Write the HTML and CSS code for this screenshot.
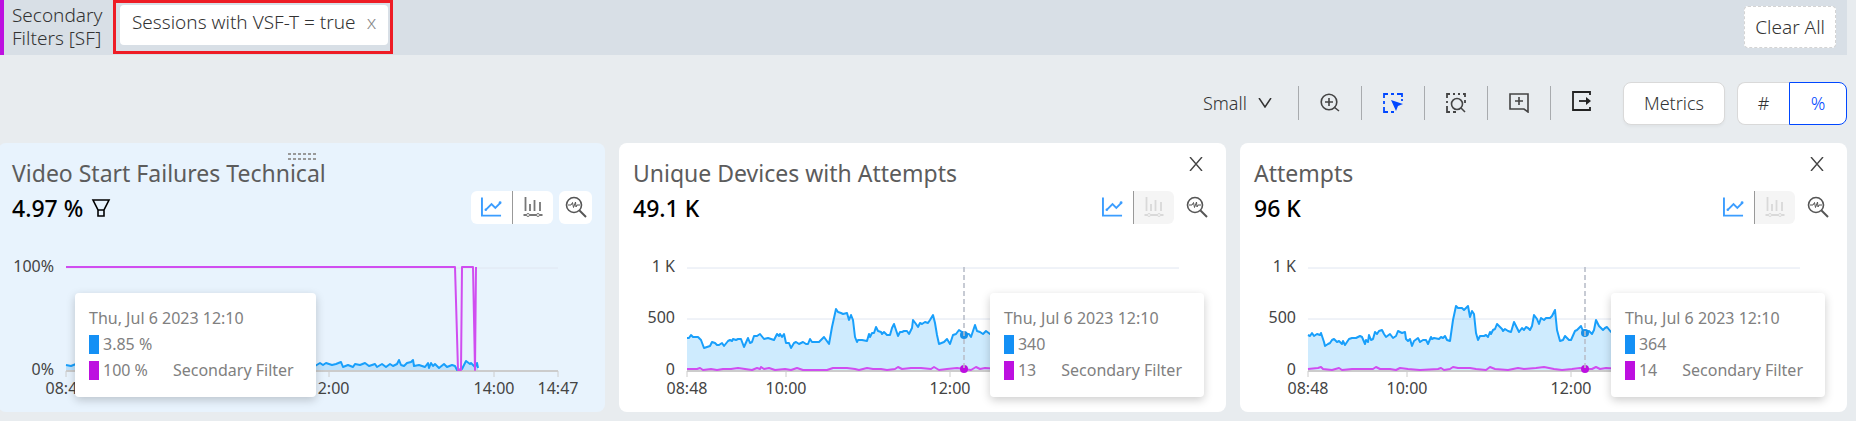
FILE: index.html
```html
<!DOCTYPE html>
<html lang="en">
  <head>
    <meta charset="UTF-8" />
    <meta name="viewport" content="width=device-width, initial-scale=1.0" />
    <title>Metrics Dashboard</title>
    <link rel="stylesheet" href="styles.css" />
  </head>
  <body>
    <!-- Shared icons -->
    <svg class="sprite" aria-hidden="true">
      <symbol id="icon-line" viewBox="0 0 22 20">
        <path d="M1 0V19H21" fill="none" stroke="currentColor" stroke-width="2" />
        <path d="M5 13L11 7L15 11L20 6" fill="none" stroke="currentColor" stroke-width="2" />
        <circle cx="5" cy="13" r="1.3" fill="currentColor" />
        <circle cx="20" cy="5.5" r="1.5" fill="currentColor" />
      </symbol>
      <symbol id="icon-bars" viewBox="0 0 20 20">
        <path d="M2 0V14M6.500 7V14M11 3V14M16.500 5V14" fill="none" stroke="currentColor" stroke-width="1.800" />
        <path d="M0 18H3M6 18H13M16 18H19" fill="none" stroke="currentColor" stroke-width="1.800" />
        <circle cx="4.500" cy="18" r="1.500" fill="none" stroke="currentColor" />
        <circle cx="14.500" cy="18" r="1.500" fill="none" stroke="currentColor" />
      </symbol>
      <symbol id="icon-inspect" viewBox="0 0 22 22">
        <circle cx="9" cy="9" r="7.500" fill="none" stroke="currentColor" stroke-width="1.600" />
        <path d="M14.500 14.500L21 21" fill="none" stroke="currentColor" stroke-width="2" />
        <path d="M3 9H6L7.500 6.500L8.500 11.500L10.500 6L11 11L12 9H15" fill="none" stroke="currentColor" />
      </symbol>
      <symbol id="icon-close" viewBox="0 0 14 14">
        <path d="M1 0L13 14M13 0L1 14" fill="none" stroke="currentColor" stroke-width="1.400" />
      </symbol>
    </svg>

    <!-- Secondary filters -->
    <header class="filter-bar">
      <p class="filter-title">Secondary<br />Filters [SF]</p>
      <div class="filter-highlight">
        <div class="chip">
          <span>Sessions with VSF-T = true</span>
          <button type="button" class="chip-remove" aria-label="Remove filter">x</button>
        </div>
      </div>
      <button type="button" class="clear-btn">Clear All</button>
    </header>

    <!-- Toolbar -->
    <div class="toolbar">
      <div class="size-picker">
        <select class="size-select" aria-label="Chart size">
          <option>Small</option>
          <option>Medium</option>
          <option>Large</option>
        </select>
        <svg class="chevron" viewBox="0 0 14 10" aria-hidden="true">
          <path d="M1 0L7 9L13 0" fill="none" stroke="currentColor" stroke-width="1.500" />
        </svg>
      </div>
      <button type="button" class="tool" aria-label="Zoom in">
        <svg viewBox="0 0 20 20">
          <circle cx="9" cy="9" r="7.800" fill="none" stroke="currentColor" stroke-width="1.600" />
          <path d="M14 14L19 18M9 5V13M5 9H13" fill="none" stroke="currentColor" stroke-width="1.600" />
        </svg>
      </button>
      <button type="button" class="tool tool-active" aria-label="Select area">
        <svg viewBox="0 0 20 20">
          <path d="M1 5V1H5M8 1H11M14 1H19V4M19 6V8M1 8V11M1 14V19H5M8 19H11" fill="none" stroke="currentColor" stroke-width="1.800" />
          <path d="M8 7L20 11L15 13L13 18Z" fill="currentColor" />
        </svg>
      </button>
      <button type="button" class="tool" aria-label="Zoom to area">
        <svg viewBox="0 0 20 20">
          <path d="M1 5V1H4M7 1H9M12 1H14M17 1H19V4M1 8V10M1 13V19H4M7 19H10M19 7V10" fill="none" stroke="currentColor" stroke-width="1.800" />
          <circle cx="11" cy="11" r="5.500" fill="none" stroke="currentColor" stroke-width="1.600" />
          <path d="M15 15L19 19" fill="none" stroke="currentColor" stroke-width="1.600" />
        </svg>
      </button>
      <button type="button" class="tool" aria-label="Add comment">
        <svg viewBox="0 0 20 20">
          <path d="M1 1H19V19L15 16H1Z" fill="none" stroke="currentColor" stroke-width="1.600" />
          <path d="M10 4V12M6 8H14" fill="none" stroke="currentColor" stroke-width="1.600" />
        </svg>
      </button>
      <button type="button" class="tool tool-export" aria-label="Export">
        <svg viewBox="0 0 20 20">
          <path d="M18 4V1H1V19H18V16" fill="none" stroke="currentColor" stroke-width="1.800" />
          <path d="M7 10H15" fill="none" stroke="currentColor" stroke-width="1.800" />
          <path d="M14 6L19 10L14 14Z" fill="currentColor" />
        </svg>
      </button>
      <button type="button" class="metrics-btn">Metrics</button>
      <div class="unit-toggle">
        <button type="button" class="unit">#</button>
        <button type="button" class="unit unit-active">%</button>
      </div>
    </div>

    <!-- Metric cards -->
    <main class="cards">
      <section class="card card-selected">
        <svg class="drag-handle" viewBox="0 0 28 8" aria-hidden="true">
          <path d="M0 2H28M0 7H28" fill="none" stroke="#999" stroke-width="2" stroke-dasharray="3 2" />
        </svg>
        <h2 class="card-title">Video Start Failures Technical</h2>
        <div class="card-row">
          <p class="card-value">
            4.97 %
            <svg class="funnel" viewBox="0 0 20 18" aria-hidden="true">
              <path d="M2 1H18L13 11V17H7V11ZM7 11H13" fill="none" stroke="currentColor" stroke-width="1.600" />
            </svg>
          </p>
          <div class="card-tools">
            <div class="view-toggle">
              <button type="button" class="view view-active" aria-label="Line chart"><svg><use href="#icon-line" /></svg></button>
              <button type="button" class="view view-bars" aria-label="Histogram"><svg><use href="#icon-bars" /></svg></button>
            </div>
            <button type="button" class="inspect" aria-label="Inspect"><svg><use href="#icon-inspect" /></svg></button>
          </div>
        </div>
        <svg class="chart" viewBox="0 0 607 169">
          <path class="grid" d="M68 25H560" />
          <path class="area" d="M68 128V122L73 123L78 121L84 123L92 121L102 123L114 121L128 123L145 121L160 123L180 121L200 123L220 121L240 123L260 121L280 123L300 121L317 123L322 120L325 122L328 120L334 122L338 121L343 119L345 124L350 122L355 124L357 121L362 122L367 120L371 123L377 121L379 124L384 121L388 124L392 121L395 123L399 121L401 117L403 122L406 123L409 120L413 119L415 117L416 123L421 122L427 124L430 120L431 125L433 120L435 123L437 121L441 125L446 121L449 124L454 122L457 123L459 127L464 126L468 118L472 121L473 120L475 122L477 124L479 120L480 125V128Z" />
          <path class="axis" d="M68 128H560" />
          <path class="tick" d="M68 128V134M331 128V134M496 128V134M560 128V134" />
          <path class="line" d="M68 122L73 123L78 121L84 123L92 121L102 123L114 121L128 123L145 121L160 123L180 121L200 123L220 121L240 123L260 121L280 123L300 121L317 123L322 120L325 122L328 120L334 122L338 121L343 119L345 124L350 122L355 124L357 121L362 122L367 120L371 123L377 121L379 124L384 121L388 124L392 121L395 123L399 121L401 117L403 122L406 123L409 120L413 119L415 117L416 123L421 122L427 124L430 120L431 125L433 120L435 123L437 121L441 125L446 121L449 124L454 122L457 123L459 127L464 126L468 118L472 121L473 120L475 122L477 124L479 120L480 125" />
          <path class="line line-secondary" d="M68 24H457L460 127H463L464 24H475L477 127L478 24" />
          <text class="label-y" x="56" y="29">100%</text>
          <text class="label-y" x="56" y="132">0%</text>
          <text class="label-x" x="68" y="151">08:48</text>
          <text class="label-x" x="331" y="151">12:00</text>
          <text class="label-x" x="496" y="151">14:00</text>
          <text class="label-x" x="560" y="151">14:47</text>
        </svg>
        <div class="tooltip tooltip-left">
          <p>Thu, Jul 6 2023 12:10</p>
          <p><span class="swatch"></span>3.85 %</p>
          <p><span class="swatch swatch-secondary"></span>100 %<span class="series">Secondary Filter</span></p>
        </div>
      </section>

      <section class="card">
        <button type="button" class="close" aria-label="Close"><svg><use href="#icon-close" /></svg></button>
        <h2 class="card-title">Unique Devices with Attempts</h2>
        <div class="card-row">
          <p class="card-value">49.1 K</p>
          <div class="card-tools">
            <div class="view-toggle">
              <button type="button" class="view view-active" aria-label="Line chart"><svg><use href="#icon-line" /></svg></button>
              <button type="button" class="view view-bars" aria-label="Histogram" disabled><svg><use href="#icon-bars" /></svg></button>
            </div>
            <button type="button" class="inspect" aria-label="Inspect"><svg><use href="#icon-inspect" /></svg></button>
          </div>
        </div>
        <svg class="chart" viewBox="0 0 607 169">
          <path class="grid" d="M68 25H560M68 76H560" />
          <path class="area" d="M68 128V95L70 95L72 92L74 94L79 94L82 97L85 105L91 103L93 99L96 100L98 102L100 102L103 100L105 103L109 98L111 97L113 98L114 96L117 97L119 96L122 96L125 104L129 95L131 100L133 99L135 93L138 93L141 91L145 96L149 95L155 97L158 91L160 93L161 91L163 94L165 91L167 100L170 100L172 105L175 100L177 99L180 101L184 99L187 101L189 101L191 96L193 99L196 99L200 99L205 94L210 101L213 84L217 66L219 69L222 70L224 71L228 70L230 77L232 72L234 77L236 94L238 99L239 97L243 97L248 98L250 91L251 94L253 90L255 90L257 84L259 88L262 89L263 91L265 89L268 92L271 92L273 85L275 81L277 87L279 93L281 89L283 89L285 88L288 88L290 91L293 85L294 77L297 81L299 84L301 80L303 81L306 79L309 80L311 77L314 72L316 80L318 92L320 101L325 99L328 96L331 101L334 92L337 91L340 87L343 89L345 92L348 91L350 91L352 94L356 82L358 88L361 89L364 91L367 88L371 91L380 90V128Z" />
          <path class="axis" d="M68 128H560" />
          <path class="tick" d="M68 128V134M167 128V134M331 128V134" />
          <path class="line" d="M68 95L70 95L72 92L74 94L79 94L82 97L85 105L91 103L93 99L96 100L98 102L100 102L103 100L105 103L109 98L111 97L113 98L114 96L117 97L119 96L122 96L125 104L129 95L131 100L133 99L135 93L138 93L141 91L145 96L149 95L155 97L158 91L160 93L161 91L163 94L165 91L167 100L170 100L172 105L175 100L177 99L180 101L184 99L187 101L189 101L191 96L193 99L196 99L200 99L205 94L210 101L213 84L217 66L219 69L222 70L224 71L228 70L230 77L232 72L234 77L236 94L238 99L239 97L243 97L248 98L250 91L251 94L253 90L255 90L257 84L259 88L262 89L263 91L265 89L268 92L271 92L273 85L275 81L277 87L279 93L281 89L283 89L285 88L288 88L290 91L293 85L294 77L297 81L299 84L301 80L303 81L306 79L309 80L311 77L314 72L316 80L318 92L320 101L325 99L328 96L331 101L334 92L337 91L340 87L343 89L345 92L348 91L350 91L352 94L356 82L358 88L361 89L364 91L367 88L371 91L380 90" />
          <path class="line line-secondary" d="M68 126L78 126L81 125L84 127L92 126L98 127L104 126L112 126L119 125L126 126L133 127L138 125L141 126L142 124L145 126L150 125L156 127L166 126L172 127L178 125L184 127L208 127L214 125L228 125L236 126L240 127L248 125L254 126L262 126L268 127L276 126L279 124L283 126L292 125L302 125L312 126L315 124L320 127L328 126L338 125L345 126L352 127L357 124L361 126L366 125L380 126" />
          <circle class="dot" cx="345" cy="92" r="4" />
          <circle class="dot dot-secondary" cx="345" cy="126" r="4" />
          <path class="marker" d="M345 24V128" />
          <text class="label-y" x="56" y="29">1 K</text>
          <text class="label-y" x="56" y="80">500</text>
          <text class="label-y" x="56" y="132">0</text>
          <text class="label-x" x="68" y="151">08:48</text>
          <text class="label-x" x="167" y="151">10:00</text>
          <text class="label-x" x="331" y="151">12:00</text>
        </svg>
        <div class="tooltip">
          <p>Thu, Jul 6 2023 12:10</p>
          <p><span class="swatch"></span>340</p>
          <p><span class="swatch swatch-secondary"></span>13<span class="series">Secondary Filter</span></p>
        </div>
      </section>

      <section class="card">
        <button type="button" class="close" aria-label="Close"><svg><use href="#icon-close" /></svg></button>
        <h2 class="card-title">Attempts</h2>
        <div class="card-row">
          <p class="card-value">96 K</p>
          <div class="card-tools">
            <div class="view-toggle">
              <button type="button" class="view view-active" aria-label="Line chart"><svg><use href="#icon-line" /></svg></button>
              <button type="button" class="view view-bars" aria-label="Histogram" disabled><svg><use href="#icon-bars" /></svg></button>
            </div>
            <button type="button" class="inspect" aria-label="Inspect"><svg><use href="#icon-inspect" /></svg></button>
          </div>
        </div>
        <svg class="chart" viewBox="0 0 607 169">
          <path class="grid" d="M68 25H560M68 76H560" />
          <path class="area" d="M68 128V92L70 93L72 90L74 93L77 91L80 92L81 90L84 99L85 103L88 101L90 100L92 97L94 96L97 99L99 98L102 101L103 98L105 102L109 96L112 95L116 95L120 93L122 94L125 101L126 97L128 99L129 92L131 97L133 96L135 89L137 91L139 88L142 87L144 91L146 94L150 91L153 95L156 93L158 88L162 90L165 89L166 96L168 98L170 96L172 103L174 98L178 95L180 99L183 97L186 97L188 101L191 94L192 96L194 95L199 96L201 94L203 95L205 93L207 97L210 98L213 77L216 63L218 65L222 65L224 67L226 65L228 63L230 74L232 68L234 71L236 90L238 97L240 93L244 93L246 92L248 94L250 89L251 91L253 87L255 86L257 81L260 84L262 86L263 88L265 86L268 88L271 89L274 79L276 83L279 89L282 85L284 87L286 84L288 85L290 87L292 83L294 72L297 76L299 81L301 75L304 77L306 75L310 75L312 73L315 67L317 87L320 98L323 97L325 93L329 97L331 97L335 88L337 87L341 83L343 88L345 90L349 88L352 91L354 87L356 77L359 83L363 87L365 85L367 84L371 89L380 88V128Z" />
          <path class="axis" d="M68 128H560" />
          <path class="tick" d="M68 128V134M167 128V134M331 128V134" />
          <path class="line" d="M68 92L70 93L72 90L74 93L77 91L80 92L81 90L84 99L85 103L88 101L90 100L92 97L94 96L97 99L99 98L102 101L103 98L105 102L109 96L112 95L116 95L120 93L122 94L125 101L126 97L128 99L129 92L131 97L133 96L135 89L137 91L139 88L142 87L144 91L146 94L150 91L153 95L156 93L158 88L162 90L165 89L166 96L168 98L170 96L172 103L174 98L178 95L180 99L183 97L186 97L188 101L191 94L192 96L194 95L199 96L201 94L203 95L205 93L207 97L210 98L213 77L216 63L218 65L222 65L224 67L226 65L228 63L230 74L232 68L234 71L236 90L238 97L240 93L244 93L246 92L248 94L250 89L251 91L253 87L255 86L257 81L260 84L262 86L263 88L265 86L268 88L271 89L274 79L276 83L279 89L282 85L284 87L286 84L288 85L290 87L292 83L294 72L297 76L299 81L301 75L304 77L306 75L310 75L312 73L315 67L317 87L320 98L323 97L325 93L329 97L331 97L335 88L337 87L341 83L343 88L345 90L349 88L352 91L354 87L356 77L359 83L363 87L365 85L367 84L371 89L380 88" />
          <path class="line line-secondary" d="M68 126L78 125L81 124L83 126L92 127L99 125L102 127L112 126L122 126L133 126L136 124L140 126L150 126L156 127L160 125L168 126L180 127L198 126L201 125L204 127L210 126L213 124L218 125L230 125L236 126L246 127L250 124L255 126L268 127L278 125L284 126L296 125L304 124L314 126L322 127L332 126L340 125L345 126L352 126L356 124L360 126L366 125L380 126" />
          <circle class="dot" cx="345" cy="90" r="4" />
          <circle class="dot dot-secondary" cx="345" cy="126" r="4" />
          <path class="marker" d="M345 24V128" />
          <text class="label-y" x="56" y="29">1 K</text>
          <text class="label-y" x="56" y="80">500</text>
          <text class="label-y" x="56" y="132">0</text>
          <text class="label-x" x="68" y="151">08:48</text>
          <text class="label-x" x="167" y="151">10:00</text>
          <text class="label-x" x="331" y="151">12:00</text>
        </svg>
        <div class="tooltip">
          <p>Thu, Jul 6 2023 12:10</p>
          <p><span class="swatch"></span>364</p>
          <p><span class="swatch swatch-secondary"></span>14<span class="series">Secondary Filter</span></p>
        </div>
      </section>
    </main>
  </body>
</html>
```
FILE: styles.css
```css
* {
  box-sizing: border-box;
}
body {
  margin: 0;
  padding-right: 9px;
  background: #e8ecef;
  color: #333;
  font-family: "Noto Sans", sans-serif;
  font-size: 18px;
  overflow-x: hidden;
}
p,
h2 {
  margin: 0;
}
button,
select {
  margin: 0;
  padding: 0;
  border: none;
  background: transparent;
  color: inherit;
  font: inherit;
}
svg {
  display: block;
}
.sprite {
  position: absolute;
  width: 0;
  height: 0;
}

/* Filter bar */
.filter-bar {
  display: flex;
  align-items: flex-start;
  height: 55px;
  border-left: 4px solid #bd10e0;
  background: #d8dfe6;
  font-size: 19px;
  font-weight: 300;
}
.filter-title {
  width: 109px;
  padding: 4px 0 0 8px;
  line-height: 23px;
}
.filter-highlight {
  padding: 2px 2px 6px 4px;
  border: 3px solid #ee1c25;
}
.chip {
  display: flex;
  align-items: center;
  height: 40px;
  padding: 0 12px 7px;
  gap: 11px;
  border-radius: 4px;
  background: #fff;
}
.chip-remove {
  color: #888;
}
.clear-btn {
  height: 42px;
  margin: 6px 11px 0 auto;
  padding: 0 10px;
  border: 1px dashed #d4d4d4;
  border-radius: 4px;
  background: #fff;
}

/* Toolbar */
.toolbar {
  display: flex;
  align-items: center;
  justify-content: flex-end;
  height: 88px;
  padding-top: 10px;
  padding-bottom: 2px;
  font-weight: 300;
}
.size-picker {
  display: flex;
  align-items: center;
  gap: 8px;
  margin-right: 26px;
}
.size-select {
  width: 47px;
  appearance: none;
}
.chevron {
  width: 14px;
  height: 10px;
}
.tool {
  display: flex;
  align-items: center;
  justify-content: center;
  width: 63px;
  height: 34px;
  border-left: 1px solid #a8abae;
  color: #444;
}
.tool svg {
  width: 20px;
  height: 20px;
}
.tool-active {
  color: #0047ff;
}
.tool-export {
  padding-bottom: 5px;
  color: #222;
}
.metrics-btn {
  height: 43px;
  margin: 0 12px 0 10px;
  padding: 0 20px;
  border: 1px solid #d9d9d9;
  border-radius: 8px;
  background: #fff;
  box-shadow: 0 2px 3px rgba(0, 0, 0, 0.04);
}
.unit-toggle {
  display: flex;
}
.unit {
  width: 52px;
  height: 43px;
  border: 1px solid #d9d9d9;
  border-right: none;
  border-radius: 8px 0 0 8px;
  background: #fff;
}
.unit-active {
  width: 58px;
  border: 1px solid #0047ff;
  border-radius: 0 8px 8px 0;
  color: #0047ff;
}

/* Cards */
.cards {
  display: grid;
  grid-template-columns: repeat(3, 1fr);
  gap: 14px;
  margin-left: -2px;
}
.card {
  position: relative;
  border-radius: 8px;
  background: #fff;
}
.card-selected {
  background: #e8f3fd;
}
.card-title {
  padding: 13px 14px 0;
  color: #5c5c5c;
  font-size: 23px;
  font-weight: 400;
  line-height: 34px;
}
.card-row {
  display: flex;
  align-items: center;
  justify-content: space-between;
  height: 34px;
  margin-bottom: 19px;
  padding: 0 13px 0 14px;
}
.card-value {
  display: flex;
  align-items: center;
  gap: 8px;
  padding-top: 2px;
  color: #000;
  font-size: 23px;
  font-weight: 500;
  line-height: 34px;
}
.funnel {
  width: 20px;
  height: 18px;
}
.card-tools {
  display: flex;
  align-items: center;
  gap: 6px;
}
.view-toggle {
  display: flex;
}
.view,
.inspect {
  display: flex;
  align-items: center;
  justify-content: center;
  height: 33px;
  border-radius: 6px;
  background: #fff;
  color: #555;
}
.view {
  width: 41px;
}
.view svg {
  width: 21px;
  height: 20px;
}
.view-active {
  border-radius: 6px 0 0 6px;
  color: #3b9dff;
}
.view-bars {
  border-left: 1px solid #999;
  border-radius: 0 6px 6px 0;
  color: #777;
}
.view-bars:disabled {
  background: #f5f5f5;
  color: #d9d9d9;
}
.inspect {
  width: 33px;
}
.inspect svg {
  width: 22px;
  height: 22px;
}
.close {
  position: absolute;
  top: 14px;
  right: 23px;
  color: #444;
}
.close svg {
  width: 14px;
  height: 14px;
}
.drag-handle {
  position: absolute;
  top: 9px;
  left: 50%;
  width: 28px;
  height: 8px;
  margin-left: -14px;
}

/* Charts */
.chart {
  width: 100%;
}
.chart path {
  fill: none;
}
.chart .grid {
  stroke: #e0e6f1;
}
.chart .area {
  fill: rgba(24, 159, 251, 0.21);
}
.chart .axis {
  stroke: #ccc;
  stroke-width: 2;
}
.chart .tick {
  stroke: #ccc;
}
.chart .line {
  stroke: #189ffb;
  stroke-width: 2;
  stroke-linejoin: round;
}
.chart .line-secondary {
  stroke: #d04df0;
}
.chart .marker {
  stroke: #b9bec9;
  stroke-width: 2;
  stroke-dasharray: 5 3;
  opacity: 0.8;
}
.dot {
  fill: #1890e8;
}
.dot-secondary {
  fill: #bd10e0;
}
.chart text {
  fill: #444;
  font-size: 16px;
}
.label-y {
  text-anchor: end;
}
.label-x {
  text-anchor: middle;
}

/* Tooltips */
.tooltip {
  position: absolute;
  right: 22px;
  bottom: 15px;
  padding: 12px 22px 14px 14px;
  border-radius: 4px;
  background: #fff;
  box-shadow: 0 3px 10px rgba(0, 0, 0, 0.2);
  color: #808080;
  font-size: 16px;
  line-height: 26px;
  white-space: nowrap;
}
.tooltip-left {
  right: auto;
  left: 77px;
}
.tooltip p {
  display: flex;
  align-items: center;
}
.swatch {
  width: 10px;
  height: 19px;
  margin-right: 4px;
  background: #1490f5;
}
.swatch-secondary {
  background: #bd10e0;
}
.series {
  margin-left: 25px;
}
```
